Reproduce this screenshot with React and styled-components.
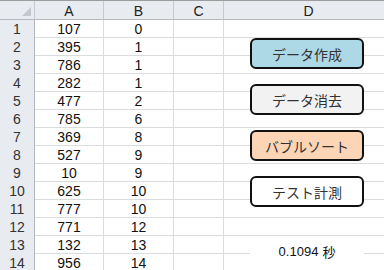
import React from 'react';
import styled, { createGlobalStyle } from 'styled-components';

const GlobalStyle = createGlobalStyle`
    html, body {
        margin: 0;
        padding: 0;
        background: #ffffff;
    }
    * {
        box-sizing: border-box;
    }
`;

const Sheet = styled.div`
    position: relative;
    width: 384px;
    height: 270px;
    overflow: hidden;
    font-family: "Liberation Sans", "Noto Sans CJK JP", sans-serif;
    border-top: 1px solid #9c9c9c;
`;

const Row = styled.div`
    display: grid;
    grid-template-columns: 35px 69px 70px 50px 170px;
    height: ${(p) => (p.$head ? '17px' : '18px')};
`;

const HeadCell = styled.div`
    display: flex;
    align-items: center;
    justify-content: center;
    background: #e8ebf0;
    border-right: 1px solid #c6cad0;
    border-bottom: 1px solid #b4b8be;
    color: #222;
    font-size: 14px;
    padding-top: 2px;
    position: relative;
`;

const Corner = styled(HeadCell)`
    &::after {
        content: '';
        position: absolute;
        right: 3px;
        bottom: 3px;
        width: 0;
        height: 0;
        border-left: 9px solid transparent;
        border-bottom: 9px solid #c4c8cd;
    }
`;

const RowHead = styled.div`
    display: flex;
    align-items: center;
    justify-content: center;
    background: #e8ebf0;
    border-right: 1px solid #b4b8be;
    border-bottom: 1px solid #c6cad0;
    color: #333;
    font-size: 14px;
    padding-top: 2px;
`;

const Cell = styled.div`
    display: flex;
    align-items: center;
    justify-content: center;
    border-right: 1px solid #dadcdd;
    border-bottom: 1px solid #dadcdd;
    color: #111;
    font-size: 14px;
    padding-top: 3px;
`;

const Shapes = styled.div`
    position: absolute;
    left: 250px;
    top: 37px;
    width: 114px;
    display: flex;
    flex-direction: column;
    gap: 15px;
`;

const MacroButton = styled.div`
    height: 31px;
    display: flex;
    align-items: center;
    justify-content: center;
    background: ${(p) => p.$bg};
    border: 2px solid #111;
    border-radius: 6px;
    color: #333;
    font-family: "Noto Sans CJK JP", sans-serif;
    font-size: 14px;
`;

const Timer = styled.div`
    margin-top: 21px;
    height: 16px;
    display: flex;
    align-items: center;
    justify-content: center;
    background: #ffffff;
    color: #111;
    font-size: 13px;
    font-family: "Liberation Sans", "Noto Sans CJK JP", sans-serif;
    gap: 4px;
`;

const data = [
    [107, 0], [395, 1], [786, 1], [282, 1], [477, 2], [785, 6], [369, 8],
    [527, 9], [10, 9], [625, 10], [777, 10], [771, 12], [132, 13], [956, 14],
];

const buttons = [
    { label: 'データ作成', bg: '#add8e6' },
    { label: 'データ消去', bg: '#f2f2f2' },
    { label: 'バブルソート', bg: '#fbd5b5' },
    { label: 'テスト計測', bg: '#ffffff' },
];

export default function App() {
    return (
        <Sheet>
            <GlobalStyle />
            <Row $head>
                <Corner />
                <HeadCell>A</HeadCell>
                <HeadCell>B</HeadCell>
                <HeadCell>C</HeadCell>
                <HeadCell>D</HeadCell>
            </Row>
            {data.map(([a, b], i) => (
                <Row key={i}>
                    <RowHead>{i + 1}</RowHead>
                    <Cell>{a}</Cell>
                    <Cell>{b}</Cell>
                    <Cell />
                    <Cell />
                </Row>
            ))}
            <Shapes>
                {buttons.map((b) => (
                    <MacroButton key={b.label} $bg={b.bg}>
                        {b.label}
                    </MacroButton>
                ))}
                <Timer>
                    <span>0.1094</span>
                    <span>秒</span>
                </Timer>
            </Shapes>
        </Sheet>
    );
}
